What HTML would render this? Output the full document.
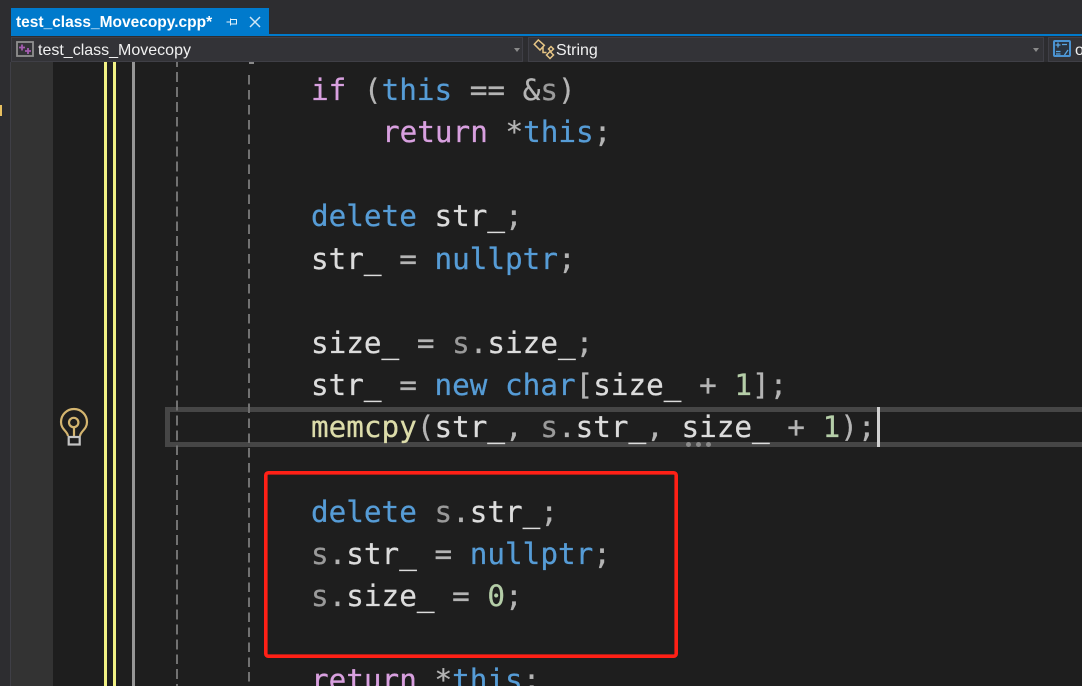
<!DOCTYPE html>
<html><head><meta charset="utf-8">
<style>
html,body{margin:0;padding:0;background:#1e1e1e}
#r{position:relative;width:1082px;height:686px;overflow:hidden;background:#1e1e1e;font-family:"Liberation Sans",sans-serif}
.a{position:absolute}
.l{position:absolute;white-space:pre;font-family:"DejaVu Sans Mono","Liberation Mono",monospace;font-size:29.3px;line-height:42px;height:42px;color:#dcdcdc;-webkit-text-stroke:0.25px currentColor}
.k{color:#d8a0df}.b{color:#569cd6}.g{color:#9a9a9a}.o{color:#b4b4b4}.f{color:#dcdcaa}.n{color:#b5cea8}
.d1{position:absolute;left:175.5px;width:2.5px;top:62px;height:624px;background:repeating-linear-gradient(to bottom,#727272 0,#727272 5px,transparent 5px,transparent 10px,#727272 10px,#727272 14.93px)}
.d2{position:absolute;left:247.5px;width:2.5px;top:75px;height:611px;background:repeating-linear-gradient(to bottom,#727272 0,#727272 9.5px,transparent 9.5px,transparent 14.93px)}
.dd{position:absolute;top:37px;height:25px;background:#333337;box-sizing:border-box;border:1px solid #3f3f46;color:#f1f1f1;font-size:16px;line-height:26px;white-space:pre}
.arr{position:absolute;width:0;height:0;border-left:3.5px solid transparent;border-right:3.5px solid transparent;border-top:4px solid #8a8a8a;top:48px}
</style></head><body>
<div id="r">
<div class="a" style="left:0;top:0;width:1082px;height:36px;background:#2d2d30"></div>
<div class="a" style="left:11px;top:8px;width:258px;height:26px;background:#007acc"></div>
<div class="a" style="left:11px;top:34px;width:1071px;height:2px;background:#007acc"></div>
<div class="a" style="left:16px;top:13px;font-size:15.5px;line-height:20px;font-weight:bold;color:#fff;white-space:pre">test_class_Movecopy.cpp*</div>
<svg class="a" style="left:225px;top:15px" width="14" height="14" viewBox="0 0 14 14" fill="none" stroke="#e6f2fa" stroke-width="1"><path d="M1.5 7H5M5.5 3.5V10.5M5.5 4.5H11.5V9H5.5"/></svg>
<svg class="a" style="left:248px;top:15px" width="14" height="14" viewBox="0 0 14 14" fill="none" stroke="#cfe6f5" stroke-width="1.5"><path d="M2 2L12 12M12 2L2 12"/></svg>

<div class="a" style="left:0;top:36px;width:1082px;height:26px;background:#2d2d30"></div>
<div class="dd" style="left:11px;width:512px;padding-left:26px">test_class_Movecopy</div>
<div class="dd" style="left:528px;width:516px;padding-left:27px">String</div>
<div class="dd" style="left:1048px;width:40px;padding-left:26px">o</div>
<div class="arr" style="left:514px"></div>
<div class="arr" style="left:1033px"></div>
<svg class="a" style="left:16px;top:41px" width="18" height="16" viewBox="0 0 18 16" fill="none"><rect x="1" y="1" width="16" height="14" stroke="#8f8f8f" stroke-width="1.8"/><path d="M3 6.500H9M6 3.500V9.500M9 10H15M12 7V13" stroke="#a45cb0" stroke-width="1.800"/></svg>
<svg class="a" style="left:531px;top:39px" width="24" height="22" viewBox="0 0 24 22" fill="none" stroke="#e6c585" stroke-width="1.5"><path d="M3.300 5.300L7.300 1L13.300 6.300L9 11ZM12 8V13.500H15.500M19 12.500L22.500 16L19 19.500L15.500 16ZM20 7.500L22.500 10L20 12.500L17.500 10Z"/></svg>
<svg class="a" style="left:1053px;top:40px" width="18" height="17" viewBox="0 0 18 17" fill="none"><rect x="1" y="1" width="16" height="15" rx="1" stroke="#4a93d2" stroke-width="2" fill="#2a3440"/><path d="M1.500 5H6.500M4 2.500V7.500M8 4.500H13M2 11.500H6.500M2 14H6.500M10.500 15L14 10" stroke="#5aa5e0" stroke-width="1.300" transform="translate(1,0)"/></svg>

<div class="a" style="left:0;top:62px;width:53px;height:624px;background:#333333"></div>
<div class="a" style="left:0;top:62px;width:10px;height:624px;background:#2d2d30"></div>
<div class="a" style="left:10px;top:62px;width:1px;height:624px;background:#3f3f46"></div>
<div class="a" style="left:0;top:105px;width:2px;height:11px;background:#e8c060"></div>

<div class="a" style="left:104px;top:62px;width:3px;height:624px;background:#f1f184"></div>
<div class="a" style="left:113px;top:62px;width:3px;height:624px;background:#f1f184"></div>
<div class="a" style="left:132px;top:62px;width:3px;height:624px;background:#969696"></div>

<div class="a" style="left:165px;top:407px;width:917px;height:5px;background:#464646"></div>
<div class="a" style="left:165px;top:442px;width:917px;height:5px;background:#464646"></div>
<div class="a" style="left:165px;top:407px;width:5px;height:40px;background:#464646"></div>
<div class="d1"></div>
<div class="d2"></div>
<div class="a" style="left:249px;top:62px;width:5px;height:2px;background:#8a8a8a"></div>

<svg class="a" style="left:58px;top:407px" width="32" height="40" viewBox="0 0 32 40" fill="none"><path d="M10 29C9.500 24 3 22.500 3 15A13 13 0 0 1 29 15C29 22.500 22.500 24 22 29" stroke="#d4b56f" stroke-width="2.200"/><circle cx="15.700" cy="15.500" r="4.700" stroke="#d4b56f" stroke-width="2.200"/><path d="M16 20.500V29.500" stroke="#d4b56f" stroke-width="2.200"/><rect x="10.700" y="30" width="11" height="7.500" stroke="#c4c4c4" stroke-width="2.200"/></svg>

<div class="l" style="left:311px;top:69px"><span class="k">if</span> <span class="o">(</span><span class="b">this</span> <span class="o">==</span> <span class="o">&amp;</span><span class="g">s</span><span class="o">)</span></div>
<div class="l" style="left:382px;top:111px"><span class="k">return</span> <span class="o">*</span><span class="b">this</span><span class="o">;</span></div>
<div class="l" style="left:311px;top:195px"><span class="b">delete</span> str_<span class="o">;</span></div>
<div class="l" style="left:311px;top:238px">str_ <span class="o">=</span> <span class="b">nullptr</span><span class="o">;</span></div>
<div class="l" style="left:311px;top:322px">size_ <span class="o">=</span> <span class="g">s</span><span class="o">.</span>size_<span class="o">;</span></div>
<div class="l" style="left:311px;top:364px">str_ <span class="o">=</span> <span class="b">new</span> <span class="b">char</span><span class="o">[</span>size_ <span class="o">+</span> <span class="n">1</span><span class="o">];</span></div>
<div class="l" style="left:311px;top:406px"><span class="f">memcpy</span><span class="o">(</span>str_<span class="o">,</span> <span class="g">s</span><span class="o">.</span>str_<span class="o">,</span> size_ <span class="o">+</span> <span class="n">1</span><span class="o">);</span></div>
<div class="a" style="left:877px;top:407px;width:3px;height:40px;background:#d0d0d0"></div>
<div class="a" style="left:686px;top:442px;width:5px;height:5px;border-radius:50%;background:#8a8a8a"></div>
<div class="a" style="left:696px;top:442px;width:5px;height:5px;border-radius:50%;background:#8a8a8a"></div>
<div class="a" style="left:706px;top:442px;width:5px;height:5px;border-radius:50%;background:#8a8a8a"></div>
<div class="l" style="left:311px;top:491px"><span class="b">delete</span> <span class="g">s</span><span class="o">.</span>str_<span class="o">;</span></div>
<div class="l" style="left:311px;top:533px"><span class="g">s</span><span class="o">.</span>str_ <span class="o">=</span> <span class="b">nullptr</span><span class="o">;</span></div>
<div class="l" style="left:311px;top:575px"><span class="g">s</span><span class="o">.</span>size_ <span class="o">=</span> <span class="n">0</span><span class="o">;</span></div>
<div class="l" style="left:311px;top:659px"><span class="k">return</span> <span class="o">*</span><span class="b">this</span><span class="o">;</span></div>

<svg class="a" style="left:260px;top:467px" width="422" height="195" fill="none"><rect x="5.800" y="5.800" width="410.400" height="183.400" rx="2.500" stroke="#ff2016" stroke-width="3.600"/></svg>
</div>
</body></html>
